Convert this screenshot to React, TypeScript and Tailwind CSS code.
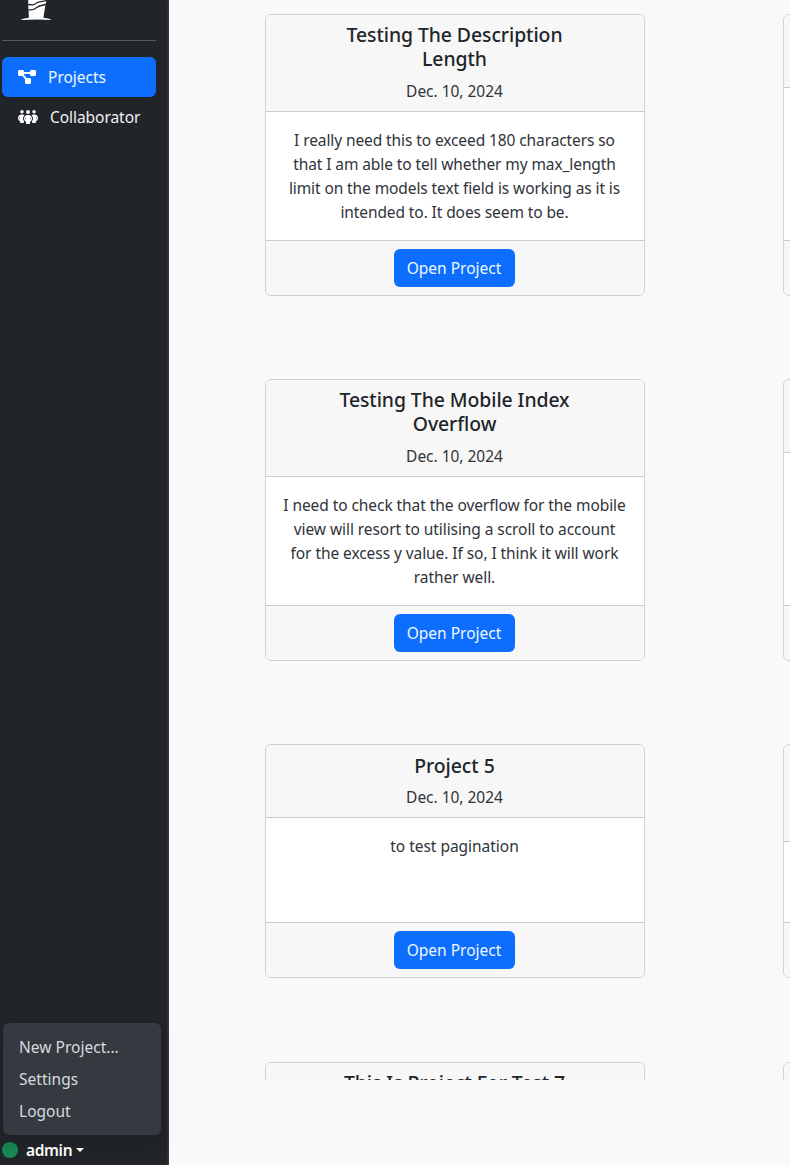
import { FaDiagramProject, FaPeopleGroup } from "react-icons/fa6";

type Project = {
  title: string[];
  date: string;
  body: string[];
  tracking: string;
};

const leftColumn: Project[] = [
  {
    title: ["Testing The Description", "Length"],
    date: "Dec. 10, 2024",
    body: [
      "I really need this to exceed 180 characters so",
      "that I am able to tell whether my max_length",
      "limit on the models text field is working as it is",
      "intended to. It does seem to be.",
    ],
    tracking: "tracking-[-0.1px]",
  },
  {
    title: ["Testing The Mobile Index", "Overflow"],
    date: "Dec. 10, 2024",
    body: [
      "I need to check that the overflow for the mobile",
      "view will resort to utilising a scroll to account",
      "for the excess y value. If so, I think it will work",
      "rather well.",
    ],
    tracking: "tracking-[-0.07px]",
  },
  { title: ["Project 5"], date: "Dec. 10, 2024", body: ["to test pagination"], tracking: "tracking-[-0.03px]" },
  { title: ["This Is Project For Test 7"], date: "Dec. 10, 2024", body: [], tracking: "tracking-normal" },
];

const rightHeaderHeights = ["h-[73px]", "h-[73px]", "h-[97px]", "h-[73px]"];
const rowHeights = ["h-[282px]", "h-[282px]", "h-[234px]", "h-[234px]"];
const rowMargins = ["mb-[83px]", "mb-[83px]", "mb-[84px]", ""];
const titlePadding = ["", "", "pt-px -mb-px", ""];

function ProjectCard({ project, titleClass }: { project: Project; titleClass: string }) {
  return (
    <article className="flex h-full w-[380px] shrink-0 flex-col overflow-hidden rounded-md border border-[#d0d1d3] bg-white text-center">
      <header className="border-b border-[#cbcbcc] bg-[#f7f7f7] py-2 pr-px">
        <div className={titleClass}>
          <h5 className="text-[19.4px] leading-6 font-medium tracking-[-0.07px]">
            {project.title.map((line) => (
              <span key={line} className="block whitespace-nowrap">
                {line}
              </span>
            ))}
          </h5>
        </div>
        <p className="mt-2 tracking-[-0.02px] text-[#30343a]">{project.date}</p>
      </header>
      <div className={`flex-1 py-4 pr-px text-[#30343a] ${project.tracking}`}>
        {project.body.map((line) => (
          <p key={line} className="whitespace-nowrap">
            {line}
          </p>
        ))}
      </div>
      <footer className="flex h-[55px] shrink-0 justify-center border-t border-[#cbcbcc] bg-[#f7f7f7] pt-2 pr-[2px]">
        <button className="h-[38px] w-[121px] rounded-md bg-[#0d6efd] tracking-normal text-[#f0f6ff]">
          Open Project
        </button>
      </footer>
    </article>
  );
}

function ClippedCard({ headerHeight }: { headerHeight: string }) {
  return (
    <article className="flex h-full w-[380px] shrink-0 flex-col overflow-hidden rounded-md border border-[#d0d1d3] bg-white">
      <header className={`${headerHeight} shrink-0 border-b border-[#cbcbcc] bg-[#f7f7f7]`} />
      <div className="flex-1" />
      <footer className="h-[55px] shrink-0 border-t border-[#cbcbcc] bg-[#f7f7f7]" />
    </article>
  );
}

function LighthouseLogo() {
  return (
    <svg className="block h-[22px] w-[34px]" viewBox="0 0 34 22">
      <path d="M9.2 0H27.6L26 7.5L24.4 17.8Q29.5 18.3 33 19.9Q17 19.2 1.2 20Q4.6 18.3 9.9 17.8L9.4 8Z" fill="#fff" />
      <path
        d="M9.2 4.4C14 5.6 15.4 4.6 18.4 2.5C21.5 .7 24.5 1.9 28 .1M9.3 9.8C14 10.6 16 9.2 18.6 7C21 4.9 24 5.7 27.6 4.1"
        fill="none"
        stroke="#212529"
        strokeWidth="1.3"
      />
    </svg>
  );
}

function Sidebar() {
  return (
    <aside className="flex h-full w-[169px] shrink-0 flex-col bg-[#212529] pr-[13px] pl-[2px] text-white shadow-[inset_-2px_0_3px_-1px_#4a3c41]">
      <div className="flex h-[40px] pl-[17px]">
        <LighthouseLogo />
      </div>
      <hr className="border-t border-[#585b5e]" />
      <nav className="mt-4 flex flex-1 flex-col">
        <a className="flex h-10 items-center rounded-md bg-[#0d6efd] pl-4">
          <FaDiagramProject className="h-4 w-[18px]" />
          <span className="ml-3 tracking-normal text-[#f0f6ff]">Projects</span>
        </a>
        <a className="flex h-10 items-center pl-4">
          <FaPeopleGroup className="h-4 w-5" />
          <span className="ml-3 tracking-[-0.05px] text-[#f2f2f3]">Collaborator</span>
        </a>
      </nav>
      <div className="relative flex h-[30px] items-center">
        <span className="size-4 rounded-full bg-[#198754]" />
        <span className="ml-2 text-[15.5px] font-semibold tracking-[-0.35px]">admin</span>
        <span className="ml-1 border-x-[4.5px] border-t-[4.5px] border-x-transparent border-t-white" />
        <div className="absolute bottom-[30px] left-px flex h-[112px] w-[158px] flex-col rounded-md bg-[#343a40] py-2 tracking-[0.02px] text-[#d6dade] shadow-[0_8px_16px_rgba(0,0,0,0.15)]">
          <a className="flex h-8 items-center pl-4">New Project...</a>
          <a className="flex h-8 items-center pl-4">Settings</a>
          <a className="flex h-8 items-center pl-4">Logout</a>
        </div>
      </div>
    </aside>
  );
}

export default function App() {
  return (
    <div className="flex h-[1165px] w-[790px] overflow-hidden bg-[#f8f9fb] font-['Noto_Sans',sans-serif] text-[15.5px] leading-6 tracking-[-0.1px] text-[#212529]">
      <Sidebar />
      <main className="h-[1080px] min-w-0 flex-1 overflow-hidden pt-[14px] pl-24">
        {leftColumn.map((project, i) => (
          <div key={project.title[0]} className={`flex gap-[138px] ${rowHeights[i]} ${rowMargins[i]}`}>
            <ProjectCard project={project} titleClass={titlePadding[i]} />
            <ClippedCard headerHeight={rightHeaderHeights[i]} />
          </div>
        ))}
      </main>
    </div>
  );
}
